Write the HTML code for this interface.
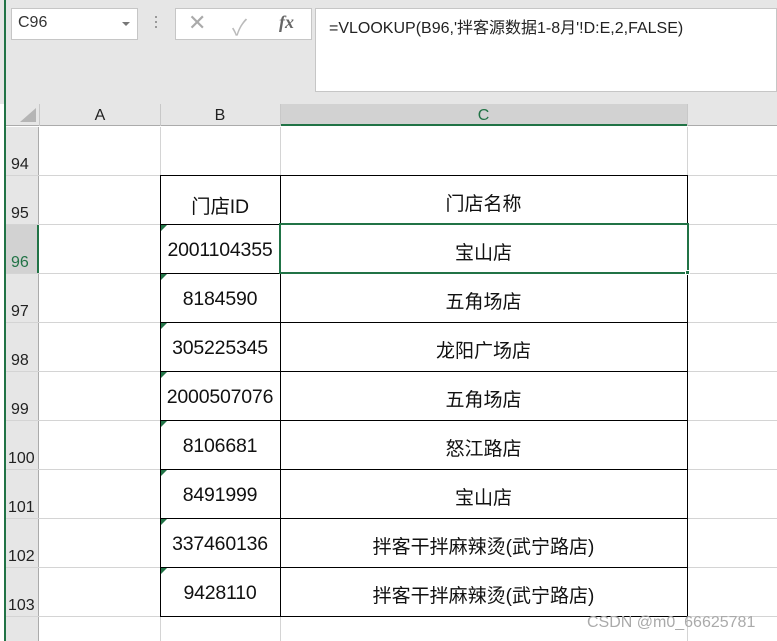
<!DOCTYPE html>
<html><head><meta charset="utf-8"><style>
*{margin:0;padding:0;box-sizing:border-box}
body{width:777px;height:641px;overflow:hidden;background:#fff;position:relative;font-family:"Liberation Sans","Noto Sans CJK SC",sans-serif}
.a{position:absolute}
</style></head><body>
<div class="a" style="left:0;top:0;width:777px;height:104px;background:#e6e6e6"></div>
<div class="a" style="left:4px;top:0;width:2px;height:641px;background:#217346"></div>
<div class="a" style="left:11px;top:8px;width:127px;height:32px;background:#fff;border:1px solid #c6c6c6"></div>
<div class="a" style="left:18px;top:14px;font-size:16px;color:#333">C96</div>
<div class="a" style="left:122px;top:22px;width:0;height:0;border-left:4px solid transparent;border-right:4px solid transparent;border-top:4px solid #777"></div>
<div class="a" style="left:155px;top:16px;width:2px;height:2px;background:#999;box-shadow:0 5px #999,0 10px #999"></div>
<div class="a" style="left:175px;top:8px;width:137px;height:32px;background:#fff;border:1px solid #c6c6c6"></div>
<div class="a" style="left:188px;top:10px;font-size:22px;color:#aaa">✕</div>
<div class="a" style="left:232px;top:10px;font-size:22px;color:#bbb">✓</div>
<div class="a" style="left:279px;top:12px;font-size:18px;color:#666;font-style:italic;font-family:'Liberation Serif',serif;font-weight:bold">fx</div>
<div class="a" style="left:315px;top:8px;width:462px;height:84px;background:#fff;border:1px solid #c6c6c6"></div>
<div class="a" style="left:329px;top:14px;font-size:16px;color:#222">=VLOOKUP(B96,'拌客源数据1-8月'!D:E,2,FALSE)</div>
<div class="a" style="left:6px;top:104px;width:771px;height:22px;background:#e6e6e6;border-bottom:1px solid #ababab"></div>
<div class="a" style="left:280px;top:104px;width:407px;height:22px;background:#d2d2d2;border-bottom:2px solid #217346"></div>
<div class="a" style="left:20px;top:108px;width:0;height:0;border-left:16px solid transparent;border-bottom:14px solid #b5b5b5"></div>
<div class="a" style="left:39px;top:104px;width:1px;height:22px;background:#c8c8c8"></div>
<div class="a" style="left:160px;top:104px;width:1px;height:22px;background:#c8c8c8"></div>
<div class="a" style="left:280px;top:104px;width:1px;height:22px;background:#c8c8c8"></div>
<div class="a" style="left:687px;top:104px;width:1px;height:22px;background:#c8c8c8"></div>
<div class="a" style="left:40px;top:107px;width:120px;text-align:center;font-size:16px;color:#222">A</div>
<div class="a" style="left:160px;top:107px;width:120px;text-align:center;font-size:16px;color:#222">B</div>
<div class="a" style="left:280px;top:107px;width:407px;text-align:center;font-size:16px;color:#217346">C</div>
<div class="a" style="left:6px;top:127px;width:33px;height:514px;background:#e6e6e6;border-right:1px solid #ababab"></div>
<div class="a" style="left:6px;top:225px;width:33px;height:48px;background:#d2d2d2;border-right:2px solid #217346"></div>
<div class="a" style="left:160px;top:127px;width:1px;height:514px;background:#d4d4d4"></div>
<div class="a" style="left:280px;top:127px;width:1px;height:514px;background:#d4d4d4"></div>
<div class="a" style="left:687px;top:127px;width:1px;height:514px;background:#d4d4d4"></div>
<div id="rows"></div>
<script>
(function(){
var r=document.getElementById('rows'),h='';
var nums=[94,95,96,97,98,99,100,101,102,103];
var B=['','门店ID','2001104355','8184590','305225345','2000507076','8106681','8491999','337460136','9428110'];
var C=['','门店名称','宝山店','五角场店','龙阳广场店','五角场店','怒江路店','宝山店','拌客干拌麻辣烫(武宁路店)','拌客干拌麻辣烫(武宁路店)'];
for(var i=0;i<10;i++){var tp=127+i*49,bt=tp+48;
h+='<div class="a" style="left:6px;top:'+bt+'px;width:771px;height:1px;background:#d4d4d4"></div>';
h+='<div class="a" style="left:'+(nums[i]>=100?8:11)+'px;top:'+(bt-19)+'px;font-size:16px;color:'+(i==2?'#217346':'#222')+'">'+nums[i]+'</div>';
if(i>0){h+='<div class="a" style="left:160px;top:'+(tp+14)+'px;width:120px;text-align:center;font-size:19.5px;color:#111;letter-spacing:-0.2px">'+B[i]+'</div>';
h+='<div class="a" style="left:280px;top:'+(tp+13)+'px;width:407px;text-align:center;font-size:19px;color:#111">'+C[i]+'</div>';}
if(i>1)h+='<div class="a" style="left:161px;top:'+tp+'px;width:0;height:0;border-right:6px solid transparent;border-top:6px solid #217346"></div>';
}
h+='<div class="a" style="left:160px;top:175px;width:528px;height:442px;border:1px solid #000"></div>';
for(var j=1;j<9;j++)h+='<div class="a" style="left:160px;top:'+(175+j*49)+'px;width:528px;height:1px;background:#000"></div>';
h+='<div class="a" style="left:280px;top:175px;width:1px;height:442px;background:#000"></div>';
h+='<div class="a" style="left:279px;top:223px;width:410px;height:51px;border:2px solid #217346"></div>';
h+='<div class="a" style="left:685px;top:270px;width:5px;height:5px;background:#217346;border:1px solid #fff"></div>';
r.innerHTML=h;
})();
</script>
<div class="a" style="left:587px;top:614px;font-size:16px;color:#aaa">CSDN @m0_66625781</div>
</body></html>
